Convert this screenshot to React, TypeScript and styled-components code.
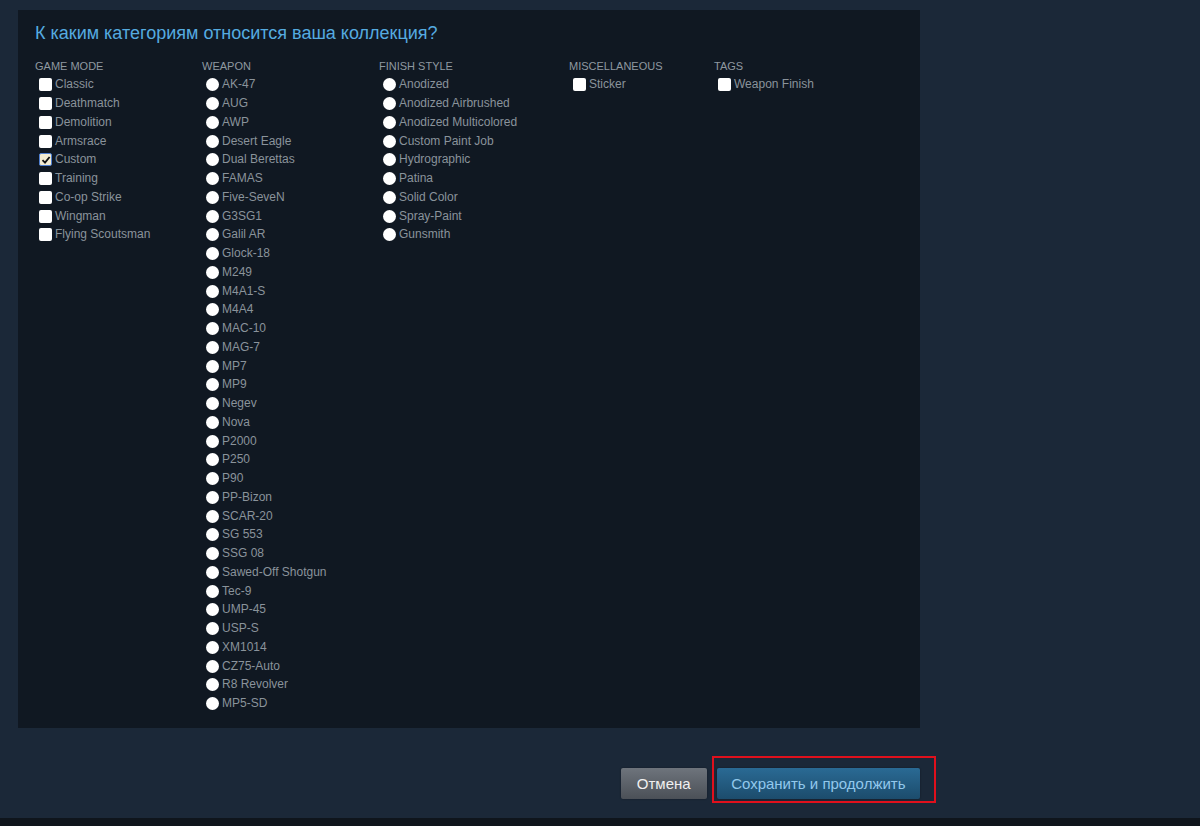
import { ReactElement } from 'react';
import styled, { createGlobalStyle } from 'styled-components';

const GlobalStyle = createGlobalStyle`
  html, body {
    margin: 0;
    padding: 0;
    background: #1b2838;
  }
  body {
    font-family: 'Liberation Sans', Arial, sans-serif;
  }
`;

interface Column {
  title: string;
  width: number;
  kind: 'check' | 'radio';
  items: string[];
  checked?: string[];
}

const columns: Column[] = [
  {
    title: 'Game Mode',
    width: 167,
    kind: 'check',
    items: ['Classic', 'Deathmatch', 'Demolition', 'Armsrace', 'Custom', 'Training', 'Co-op Strike', 'Wingman', 'Flying Scoutsman'],
    checked: ['Custom'],
  },
  {
    title: 'Weapon',
    width: 177,
    kind: 'radio',
    items: [
      'AK-47', 'AUG', 'AWP', 'Desert Eagle', 'Dual Berettas', 'FAMAS', 'Five-SeveN', 'G3SG1', 'Galil AR',
      'Glock-18', 'M249', 'M4A1-S', 'M4A4', 'MAC-10', 'MAG-7', 'MP7', 'MP9', 'Negev', 'Nova', 'P2000',
      'P250', 'P90', 'PP-Bizon', 'SCAR-20', 'SG 553', 'SSG 08', 'Sawed-Off Shotgun', 'Tec-9', 'UMP-45',
      'USP-S', 'XM1014', 'CZ75-Auto', 'R8 Revolver', 'MP5-SD',
    ],
  },
  {
    title: 'Finish Style',
    width: 190,
    kind: 'radio',
    items: ['Anodized', 'Anodized Airbrushed', 'Anodized Multicolored', 'Custom Paint Job', 'Hydrographic', 'Patina', 'Solid Color', 'Spray-Paint', 'Gunsmith'],
  },
  { title: 'Miscellaneous', width: 145, kind: 'check', items: ['Sticker'] },
  { title: 'Tags', width: 160, kind: 'check', items: ['Weapon Finish'] },
];

const App = (): ReactElement => {
  return (
    <>
      <GlobalStyle />
      <StyledPage>
        <StyledPanel>
          <StyledTitle>К каким категориям относится ваша коллекция?</StyledTitle>
          <StyledColumns>
            {columns.map((col) => (
              <StyledColumn key={col.title} $width={col.width}>
                <StyledHeader>{col.title}</StyledHeader>
                {col.items.map((item) => {
                  const isChecked = col.checked?.includes(item) ?? false;
                  return (
                    <StyledRow key={item}>
                      {col.kind === 'radio' ? (
                        <StyledRadio />
                      ) : (
                        <StyledCheck $checked={isChecked}>
                          {isChecked && (
                            <svg width="10" height="10" viewBox="0 0 10 10">
                              <path d="M1.5 5.2 L4 7.6 L8.6 2" fill="none" stroke="#111" strokeWidth="1.8" />
                            </svg>
                          )}
                        </StyledCheck>
                      )}
                      <span>{item}</span>
                    </StyledRow>
                  );
                })}
              </StyledColumn>
            ))}
          </StyledColumns>
        </StyledPanel>
        <StyledFooter>
          <StyledButton $variant="grey">Отмена</StyledButton>
          <StyledHighlightWrap>
            <StyledButton $variant="blue">Сохранить и продолжить</StyledButton>
            <StyledHighlight />
          </StyledHighlightWrap>
        </StyledFooter>
        <StyledBottomBar />
      </StyledPage>
    </>
  );
};

export default App;

const StyledPage = styled.div`
  display: flex;
  flex-direction: column;
  min-height: 826px;
  padding: 10px 0 0 18px;
  box-sizing: border-box;
`;

const StyledPanel = styled.div`
  width: 902px;
  height: 718px;
  box-sizing: border-box;
  background: #101822;
  padding: 13px 17px 0;
`;

const StyledTitle = styled.div`
  font-size: 18px;
  line-height: 21px;
  color: #55abe0;
`;

const StyledColumns = styled.div`
  display: flex;
  margin-top: 16px;
`;

const StyledColumn = styled.div<{ $width: number }>`
  width: ${(props) => props.$width}px;
  display: flex;
  flex-direction: column;
`;

const StyledHeader = styled.div`
  font-size: 11px;
  line-height: 13px;
  text-transform: uppercase;
  color: #8f98a0;
  margin-bottom: 2px;
`;

const StyledRow = styled.div`
  display: flex;
  align-items: center;
  height: 18.76px;
  font-size: 12px;
  color: #8a939b;
`;

const StyledCheck = styled.span<{ $checked: boolean }>`
  width: 13px;
  height: 13px;
  box-sizing: border-box;
  margin: 1px 3px 0 4px;
  border-radius: 2px;
  display: flex;
  align-items: center;
  justify-content: center;
  background: ${(props) => (props.$checked ? '#f3ecd2' : '#ffffff')};
  border: ${(props) => (props.$checked ? '1px solid #4f7fd0' : 'none')};
`;

const StyledRadio = styled.span`
  width: 13px;
  height: 13px;
  margin: 1px 3px 0 4px;
  border-radius: 50%;
  background: #ffffff;
`;

const StyledFooter = styled.div`
  width: 902px;
  display: flex;
  justify-content: flex-end;
  gap: 10px;
  margin-top: 40px;
`;

const StyledButton = styled.button<{ $variant: 'grey' | 'blue' }>`
  height: 31px;
  border: none;
  border-radius: 2px;
  font-family: 'Liberation Sans', Arial, sans-serif;
  font-size: 15px;
  cursor: pointer;
  padding: ${(props) => (props.$variant === 'grey' ? '0 16px' : '0 14.5px')};
  color: ${(props) => (props.$variant === 'grey' ? '#f0f0f0' : '#92c8ec')};
  background: ${(props) =>
    props.$variant === 'grey'
      ? 'linear-gradient(to bottom, #6e747c 0%, #4b5057 100%)'
      : 'linear-gradient(to bottom, #2a6a94 0%, #1c4c6c 100%)'};
  box-shadow: 0 0 2px rgba(0, 0, 0, 0.4);
`;

const StyledHighlightWrap = styled.div`
  position: relative;
  display: flex;
`;

const StyledHighlight = styled.div`
  position: absolute;
  left: -5px;
  right: -16px;
  top: -12px;
  bottom: -4px;
  border: 2px solid #e0101c;
  pointer-events: none;
`;

const StyledBottomBar = styled.div`
  margin: 19px 0 0 -18px;
  flex: 1;
  min-height: 8px;
  background: #0f151c;
`;
